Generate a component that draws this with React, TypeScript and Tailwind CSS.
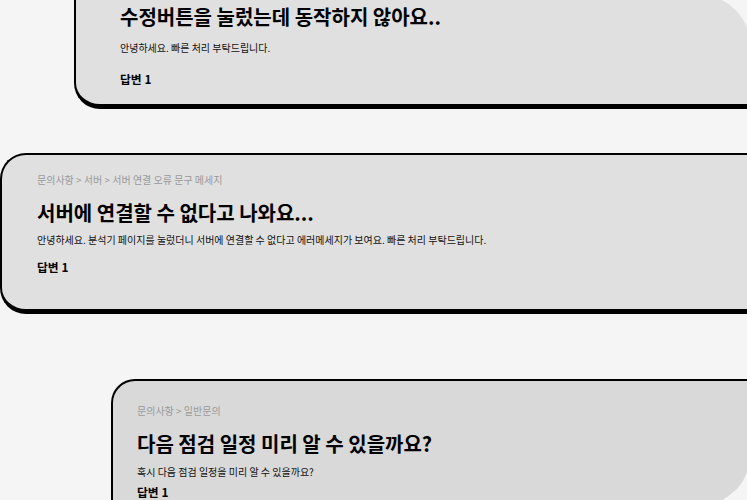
import React from "react";

export default function App() {
  return (
    <div className="w-[747px] h-[500px] overflow-hidden bg-[#f5f5f5] flex flex-col items-start font-[Noto_Sans_CJK_KR,Noto_Sans,sans-serif]">
      {/* Card 1 */}
      <div className="shrink-0 mt-[-5px] ml-[74px] w-[676px] h-[114px] bg-[#e0e0e0] border-l-2 border-b-[5px] border-black rounded-bl-[26px] rounded-tr-[50px] pl-[44px] pt-[8px]">
        <div className="text-[20px] leading-[28px] font-bold text-black">수정버튼을 눌렀는데 동작하지 않아요..</div>
        <div className="mt-[10px] text-[10px] leading-[14px] text-[#111]">안녕하세요. 빠른 처리 부탁드립니다.</div>
        <div className="mt-[16px] text-[11.8px] leading-[16px] font-bold text-black">답변 1</div>
      </div>

      {/* Card 2 */}
      <div className="shrink-0 mt-[44px] ml-0 w-[900px] h-[161px] bg-[#e0e0e0] border-l-2 border-t-2 border-b-[5px] border-black rounded-tl-[26px] rounded-bl-[26px] pl-[35px] pt-[18px]">
        <div className="text-[10px] leading-[14px] text-[#999]">문의사항 &gt; 서버 &gt; 서버 연결 오류 문구 메세지</div>
        <div className="mt-[12px] text-[20px] leading-[28px] font-bold text-black">서버에 연결할 수 없다고 나와요...</div>
        <div className="mt-[6px] text-[10px] leading-[14px] text-[#111]">안녕하세요. 분석기 페이지를 눌렀더니 서버에 연결할 수 없다고 에러메세지가 보여요. 빠른 처리 부탁드립니다.</div>
        <div className="mt-[12px] text-[11.8px] leading-[16px] font-bold text-black">답변 1</div>
      </div>

      {/* Card 3 */}
      <div className="shrink-0 mt-[65px] ml-[111px] w-[639px] h-[126px] bg-[#d9d9d9] border-l-2 border-t-2 border-black rounded-tl-[24px] rounded-br-[50px] pl-[24px] pt-[23px]">
        <div className="text-[10px] leading-[14px] text-[#999]">문의사항 &gt; 일반문의</div>
        <div className="mt-[12px] text-[20px] leading-[28px] font-bold text-black">다음 점검 일정 미리 알 수 있을까요?</div>
        <div className="mt-[7px] text-[10px] leading-[14px] text-[#111]">혹시 다음 점검 일정을 미리 알 수 있을까요?</div>
        <div className="mt-[5px] text-[11.8px] leading-[16px] font-bold text-black">답변 1</div>
      </div>
    </div>
  );
}
